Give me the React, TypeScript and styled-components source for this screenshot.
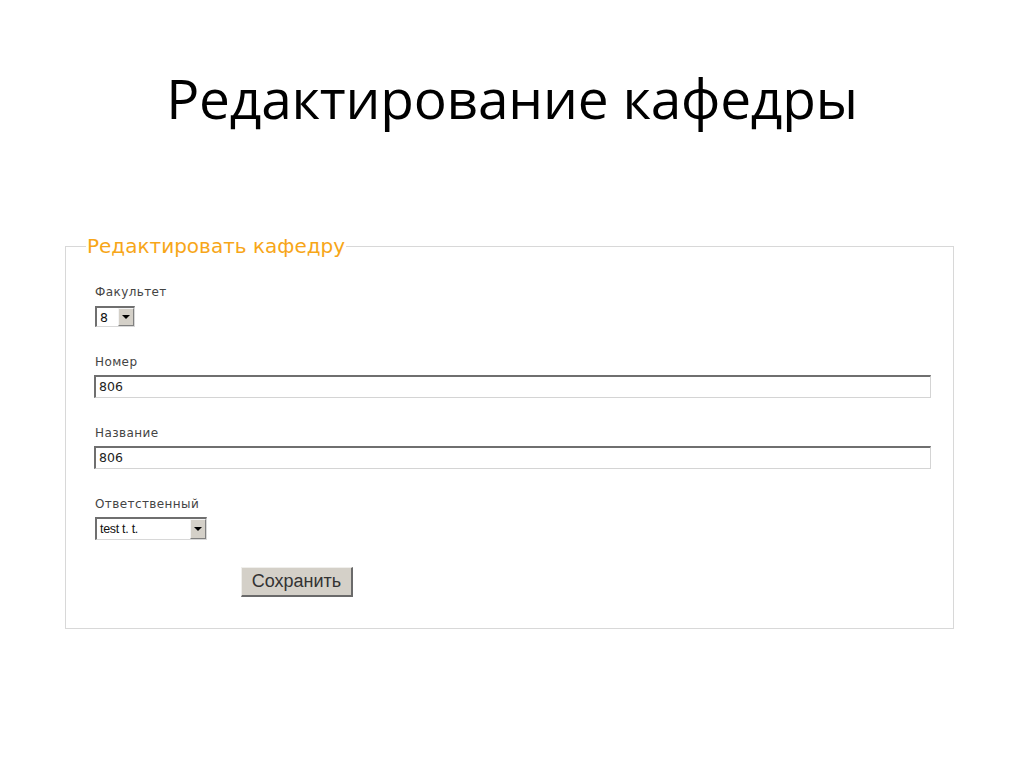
import React from "react";
import styled, { createGlobalStyle } from "styled-components";

const Global = createGlobalStyle`
  html, body { margin: 0; padding: 0; background: #ffffff; }
  body { width: 1024px; height: 768px; overflow: hidden; }
`;

const Slide = styled.div`
  width: 1024px;
  height: 768px;
  display: flex;
  flex-direction: column;
  align-items: center;
  background: #fff;
`;

const Title = styled.h1`
  margin: 61px 0 0 0;
  font-family: "Open Sans", "Noto Sans", sans-serif;
  font-weight: 400;
  font-size: 55px;
  line-height: 74px;
  color: #000;
  letter-spacing: -0.2px;
`;

const Fieldset = styled.fieldset`
  margin: 100px 0 0 0;
  align-self: flex-start;
  margin-left: 65px;
  width: 889px;
  box-sizing: border-box;
  border: 1px solid #d8d8d8;
  padding: 0 0 31px 20px;
`;

const Legend = styled.legend`
  padding: 0 1px;
  font-family: "DejaVu Sans", Verdana, sans-serif;
  font-size: 20px;
  line-height: 22px;
  color: #f7a618;
`;

const Form = styled.div`
  display: flex;
  flex-direction: column;
  padding: 28px 22px 0 9px;
`;

const Field = styled.div<{ $gap: number; $after: number }>`
  display: flex;
  flex-direction: column;
  align-items: flex-start;
  gap: ${(p) => p.$gap}px;
  margin-bottom: ${(p) => p.$after}px;
`;

const Label = styled.label`
  font-family: "DejaVu Sans", Verdana, sans-serif;
  font-size: 12px;
  line-height: 15px;
  color: #444;
  letter-spacing: 0.4px;
`;

const TextInput = styled.div`
  align-self: stretch;
  margin-left: -1px;
  height: 23px;
  box-sizing: border-box;
  border-top: 2px solid #6f6f6f;
  border-left: 2px solid #6f6f6f;
  border-right: 1px solid #d4d4d4;
  border-bottom: 1px solid #d4d4d4;
  padding: 2px 0 0 3px;
  font-family: "DejaVu Sans", Verdana, sans-serif;
  font-size: 12.5px;
  line-height: 16px;
  color: #222;
`;

const Select = styled.div<{ $w: number; $h: number }>`
  width: ${(p) => p.$w}px;
  height: ${(p) => p.$h}px;
  box-sizing: border-box;
  display: flex;
  align-items: stretch;
  border-top: 2px solid #6f6f6f;
  border-left: 2px solid #6f6f6f;
  border-right: 1px solid #d8d8d8;
  border-bottom: 1px solid #d8d8d8;
  background: #fff;
`;

const SelectValue = styled.span<{ $font: string }>`
  flex: 1;
  display: flex;
  align-items: center;
  padding-left: 3px;
  font-family: ${(p) => p.$font};
  font-size: 12.5px;
  color: #111;
  letter-spacing: -0.3px;
`;

const ArrowButton = styled.span`
  width: 16px;
  display: flex;
  align-items: center;
  justify-content: center;
  background: #d4d0c8;
  border-top: 1px solid #f4f4f4;
  border-left: 1px solid #f4f4f4;
  border-right: 1px solid #808080;
  border-bottom: 1px solid #808080;
  box-sizing: border-box;
`;

const Arrow = styled.span`
  width: 0;
  height: 0;
  border-left: 4px solid transparent;
  border-right: 4px solid transparent;
  border-top: 4px solid #000;
`;

const ButtonRow = styled.div`
  display: flex;
  padding-left: 146px;
`;

const SaveButton = styled.button`
  width: 112px;
  height: 30px;
  box-sizing: border-box;
  background: #d4d0c8;
  border-top: 1px solid #f0efec;
  border-left: 1px solid #f0efec;
  border-right: 2px solid #6a6a6a;
  border-bottom: 2px solid #6a6a6a;
  font-family: "Liberation Sans", Arial, sans-serif;
  font-size: 18px;
  color: #333;
  padding: 0;
`;

export default function App() {
  return (
    <>
      <Global />
      <Slide>
        <Title>Редактирование кафедры</Title>
        <Fieldset>
          <Legend>Редактировать кафедру</Legend>
          <Form>
            <Field $gap={6} $after={28}>
              <Label>Факультет</Label>
              <Select $w={40} $h={21}>
                <SelectValue $font={'"DejaVu Sans", Verdana, sans-serif'}>8</SelectValue>
                <ArrowButton>
                  <Arrow />
                </ArrowButton>
              </Select>
            </Field>
            <Field $gap={5} $after={28}>
              <Label>Номер</Label>
              <TextInput>806</TextInput>
            </Field>
            <Field $gap={5} $after={28}>
              <Label>Название</Label>
              <TextInput>806</TextInput>
            </Field>
            <Field $gap={5} $after={27}>
              <Label>Ответственный</Label>
              <Select $w={112} $h={23}>
                <SelectValue $font={'"Liberation Sans", Arial, sans-serif'}>test t. t.</SelectValue>
                <ArrowButton>
                  <Arrow />
                </ArrowButton>
              </Select>
            </Field>
            <ButtonRow>
              <SaveButton>Сохранить</SaveButton>
            </ButtonRow>
          </Form>
        </Fieldset>
      </Slide>
    </>
  );
}
